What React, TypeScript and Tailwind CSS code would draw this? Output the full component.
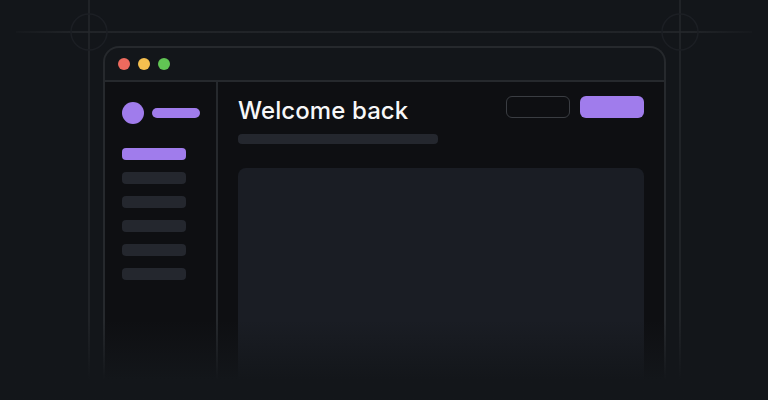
function Guides() {
  return (
    <svg className="absolute inset-0" width="768" height="400" fill="none">
      <defs>
        <linearGradient id="hline" x1="0" y1="0" x2="768" y2="0" gradientUnits="userSpaceOnUse">
          <stop offset="0" stopColor="#26292d" stopOpacity="0" />
          <stop offset="0.1" stopColor="#26292d" />
          <stop offset="0.9" stopColor="#26292d" />
          <stop offset="1" stopColor="#26292d" stopOpacity="0" />
        </linearGradient>
      </defs>
      <path d="M16 32H752" stroke="url(#hline)" strokeWidth="1.5" />
      <path d="M89 0V400M680 0V400" stroke="#26292d" strokeWidth="1.5" />
      <circle cx="89" cy="32" r="18" stroke="#1c1f24" strokeWidth="1.5" />
      <circle cx="680" cy="32" r="18" stroke="#1c1f24" strokeWidth="1.5" />
    </svg>
  )
}

const navItems = [0, 1, 2, 3, 4]

export default function App() {
  return (
    <div
      className="relative h-[400px] w-[768px] overflow-hidden bg-[#13161a] pt-[46px] pl-[103px]"
      style={{ fontFamily: "Inter, sans-serif" }}
    >
      <Guides />

      {/* Browser window */}
      <div className="relative flex h-[354px] w-[563px] flex-col rounded-t-[16px] border-2 border-b-0 border-[#26292d] bg-[#13161a]">
        <div className="flex h-[32px] shrink-0 items-center gap-2 pl-[13px]">
          <span className="h-3 w-3 rounded-full bg-[#ed6a5e]" />
          <span className="h-3 w-3 rounded-full bg-[#f5bf4f]" />
          <span className="h-3 w-3 rounded-full bg-[#61c554]" />
        </div>

        <div className="flex flex-1 border-t-2 border-[#26292d] bg-[#0e0f12]">
          {/* Sidebar */}
          <div className="flex w-[113px] shrink-0 flex-col border-r-2 border-[#26292d] pt-5 pl-[17px]">
            <div className="flex items-center gap-2">
              <span className="h-[22px] w-[22px] rounded-full bg-[#a07cec]" />
              <span className="h-[10px] w-12 rounded-full bg-[#a07cec]" />
            </div>
            <div className="mt-6 flex flex-col gap-3">
              <div className="h-3 w-16 rounded bg-[#a07cec]" />
              {navItems.map((item) => (
                <div key={item} className="h-3 w-16 rounded bg-[#24272e]" />
              ))}
            </div>
          </div>

          {/* Main */}
          <div className="flex flex-1 flex-col pt-[14px] pl-5">
            <div className="flex items-start justify-between pr-5">
              <div>
                <h1 className="text-2xl leading-[29px] font-medium tracking-[0.1px] text-[#f7f7f8]">Welcome back</h1>
                <div className="mt-[9px] h-[10px] w-[200px] rounded bg-[#24272e]" />
              </div>
              <div className="flex gap-[10px]">
                <div className="h-[22px] w-16 rounded-md border border-[#3a3d42]" />
                <div className="h-[22px] w-16 rounded-md bg-[#a07cec]" />
              </div>
            </div>
            <div className="mt-6 mr-5 flex-1 rounded-lg bg-[#1a1d24]" />
          </div>
        </div>
      </div>

      {/* Bottom fade */}
      <div className="absolute inset-x-0 bottom-0 h-[80px] bg-gradient-to-b from-[#13161a00] to-[#13161a] to-75%" />
    </div>
  )
}
